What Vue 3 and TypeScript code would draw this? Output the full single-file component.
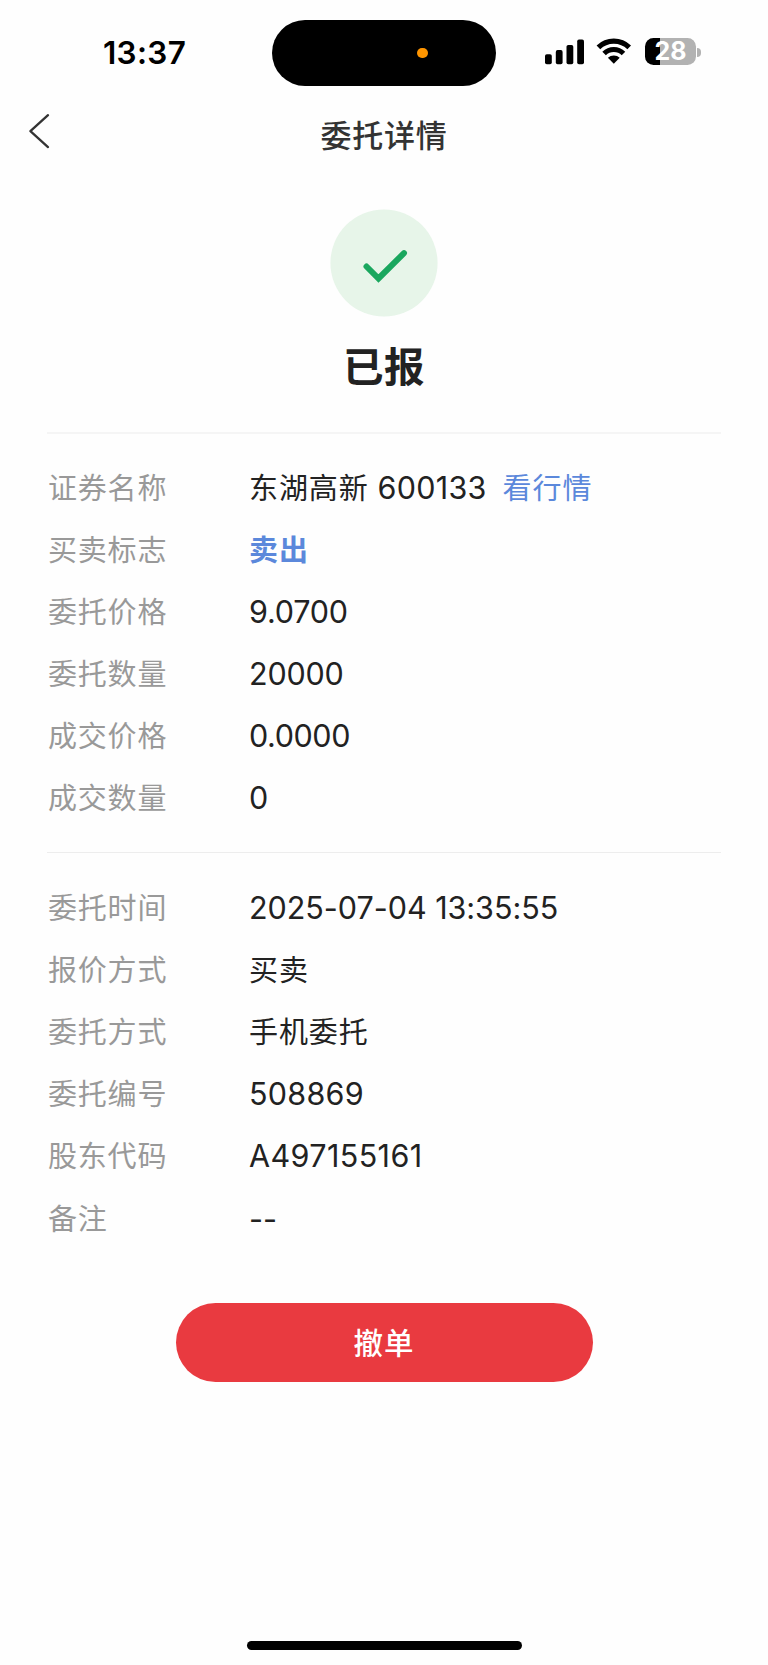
<script setup lang="ts">
interface Part {
  text: string
  kind: 'han' | 'num' | 'link' | 'sell'
  tracking?: number
}
interface Row {
  label: string
  parts: Part[]
}

const groups: Row[][] = [
  [
    {
      label: '证券名称',
      parts: [
        { text: '东湖高新', kind: 'han' },
        { text: '600133', kind: 'num', tracking: 0.25 },
        { text: '看行情', kind: 'link' },
      ],
    },
    { label: '买卖标志', parts: [{ text: '卖出', kind: 'sell' }] },
    { label: '委托价格', parts: [{ text: '9.0700', kind: 'num', tracking: -0.2 }] },
    { label: '委托数量', parts: [{ text: '20000', kind: 'num', tracking: -0.2 }] },
    { label: '成交价格', parts: [{ text: '0.0000', kind: 'num', tracking: -0.4 }] },
    { label: '成交数量', parts: [{ text: '0', kind: 'num' }] },
  ],
  [
    { label: '委托时间', parts: [{ text: '2025-07-04 13:35:55', kind: 'num', tracking: -0.03 }] },
    { label: '报价方式', parts: [{ text: '买卖', kind: 'han' }] },
    { label: '委托方式', parts: [{ text: '手机委托', kind: 'han' }] },
    { label: '委托编号', parts: [{ text: '508869', kind: 'num', tracking: 0.25 }] },
    { label: '股东代码', parts: [{ text: 'A497155161', kind: 'num', tracking: 0.4 }] },
    { label: '备注', parts: [{ text: '--', kind: 'num' }] },
  ],
]

const trackingStyle = (p: Part) =>
  p.tracking === undefined ? undefined : { letterSpacing: `${p.tracking}px` }
</script>

<template>
  <div class="screen">
    <header class="status-bar">
      <div class="time">13:37</div>
      <div class="island"><i class="mic-dot"></i></div>
      <div class="indicators">
        <svg class="signal" width="39" height="28" viewBox="0 0 39 28">
          <rect x="0" y="16.3" width="6.8" height="9.9" rx="1.8" />
          <rect x="10.8" y="12.1" width="6.8" height="14.1" rx="1.8" />
          <rect x="21.5" y="6.9" width="6.8" height="19.3" rx="1.8" />
          <rect x="32.2" y="1.5" width="6.8" height="24.7" rx="1.8" />
        </svg>
        <svg class="wifi" width="36" height="28" viewBox="0 0 36 28">
          <path d="M2.4 9.4A22.1 22.1 0 0 1 33.2 9.4" fill="none" stroke="#000" stroke-width="5.2" />
          <path d="M8.1 15.5A13.8 13.8 0 0 1 27.5 15.5" fill="none" stroke="#000" stroke-width="5" />
          <path d="M17.8 25.8L11.9 19.8A8.4 8.4 0 0 1 23.7 19.8Z" />
        </svg>
        <div class="battery"><span>28</span></div>
        <i class="battery-cap"></i>
      </div>
    </header>

    <nav class="nav">
      <svg class="back" width="24" height="36" viewBox="0 0 24 36">
        <path d="M21 2.2L3.4 18.2L21 34.1" fill="none" stroke="#333" stroke-width="2.3" stroke-linecap="round" stroke-linejoin="round" />
      </svg>
      <h1>委托详情</h1>
    </nav>

    <section class="result">
      <svg width="108" height="108" viewBox="0 0 108 108">
        <circle cx="54" cy="54" r="53.6" fill="#e7f5e9" />
        <path d="M36.5 57.5L48.5 69.5L74 44.1" fill="none" stroke="#1aa75e" stroke-width="6" stroke-linecap="round" stroke-linejoin="miter" />
      </svg>
      <h2>已报</h2>
    </section>

    <dl v-for="(rows, i) in groups" :key="i" class="group">
      <div v-for="row in rows" :key="row.label" class="row">
        <dt>{{ row.label }}</dt>
        <dd>
          <span v-for="p in row.parts" :key="p.text" :class="p.kind" :style="trackingStyle(p)">{{ p.text }}</span>
        </dd>
      </div>
    </dl>

    <button class="cancel" type="button">撤单</button>
    <div class="home-bar"></div>
  </div>
</template>

<style>
body {
  background: #fff;
}
</style>

<style scoped>
.screen {
  box-sizing: border-box;
  width: 768px;
  height: 1665px;
  display: flex;
  flex-direction: column;
  background: #fefefe;
  color: #222;
  font-family: Inter, "Noto Sans CJK SC", sans-serif;
  overflow: hidden;
}
.status-bar {
  height: 106px;
  display: grid;
  grid-template-columns: 272px 224px 272px;
  flex: none;
}
.time {
  padding: 33px 0 0 103px;
  font-size: 31.5px;
  line-height: 40px;
  font-weight: 600;
  letter-spacing: 0.3px;
  color: #000;
}
.island {
  box-sizing: border-box;
  margin-top: 20px;
  height: 66px;
  padding: 27.5px 0 0 145px;
  border-radius: 33px;
  background: #000;
}
.mic-dot {
  display: block;
  width: 10.6px;
  height: 10.6px;
  border-radius: 50%;
  background: #ff9500;
}
.indicators {
  display: flex;
  align-items: center;
  height: 28px;
  padding: 38px 0 0 49px;
}
.wifi {
  margin-left: 12px;
}
.battery {
  width: 51px;
  height: 27px;
  margin: -1px 0 0 13px;
  border-radius: 8.5px;
  background: linear-gradient(90deg, #000 14.6px, #b2b2b2 14.6px);
  color: #fff;
  font-size: 25px;
  line-height: 27px;
  font-weight: 700;
  text-align: center;
}
.battery-cap {
  width: 3.4px;
  height: 9px;
  margin-left: 1.2px;
  border-radius: 0 4px 4px 0;
  background: #b2b2b2;
}
.nav {
  height: 60px;
  flex: none;
  display: grid;
  grid-template-columns: 120px 1fr 120px;
}
.back {
  margin: 7px 0 0 27px;
}
h1 {
  margin: 0;
  font-size: 31px;
  line-height: 60px;
  font-weight: 500;
  letter-spacing: 0.7px;
  text-align: center;
  color: #333;
}
.result {
  box-sizing: border-box;
  height: 266px;
  flex: none;
  display: flex;
  flex-direction: column;
  align-items: center;
  padding-top: 43px;
}
h2 {
  margin: 21px 0 0;
  font-size: 40.5px;
  line-height: 60px;
  font-weight: 700;
  letter-spacing: 0.5px;
}
.group {
  box-sizing: border-box;
  margin: 0 47px;
  padding: 23.5px 1px 0;
  border-top: 2px solid #f5f5f5;
  height: 420px;
  flex: none;
}
.group + .group {
  height: 451px;
  padding-top: 24.6px;
  border-top: 1px solid #ededed;
}
.row {
  display: flex;
  height: 62.2px;
  line-height: 62px;
  font-size: 29px;
}
dt {
  width: 201px;
  color: #999;
  letter-spacing: 0.8px;
}
dd {
  margin: 0;
  display: flex;
  white-space: pre;
}
.han {
  letter-spacing: 0.9px;
}
.num {
  font-size: 30.5px;
  line-height: 60px;
}
.group + .group .num {
  line-height: 59px;
}
.han + .num {
  margin-left: 9px;
}
.link {
  margin-left: 16px;
  letter-spacing: 0.9px;
  color: #5b88db;
}
.sell {
  letter-spacing: 0.9px;
  font-weight: 700;
  color: #5b88db;
}
.cancel {
  width: 417px;
  height: 79px;
  flex: none;
  align-self: center;
  border: 0;
  border-radius: 40px;
  padding: 0 0 4px;
  background: #e93a40;
  color: #fff;
  font-family: inherit;
  font-size: 29.5px;
  font-weight: 500;
  letter-spacing: 1px;
}
.home-bar {
  width: 275px;
  height: 9px;
  margin-top: auto;
  margin-bottom: 15px;
  align-self: center;
  flex: none;
  border-radius: 5px;
  background: #000;
}
</style>
